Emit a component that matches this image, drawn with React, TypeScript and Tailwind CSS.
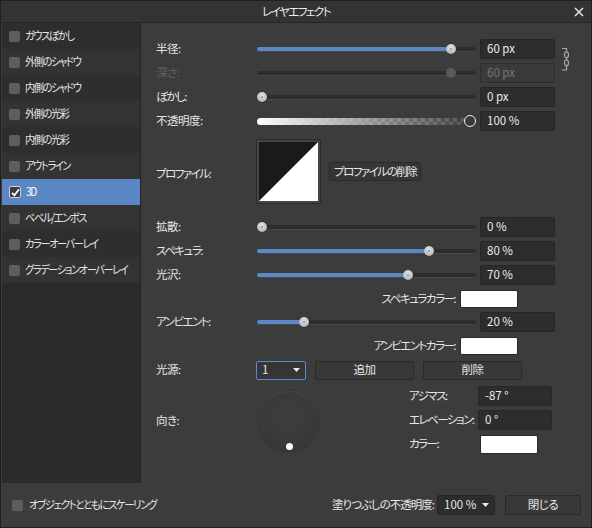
import React from 'react';

// kana-heavy labels are drawn tighter than kanji ones
const K = 'tracking-[-1.5px]';

const effects = [
  'ガウスぼかし',
  '外側のシャドウ',
  '内側のシャドウ',
  '外側の光彩',
  '内側の光彩',
  'アウトライン',
  '3D',
  'ベベル/エンボス',
  'カラーオーバーレイ',
  'グラデーションオーバーレイ',
];

function Check({ checked }: { checked?: boolean }) {
  if (checked) {
    return (
      <div className="w-[12px] h-[12px] rounded-[2px] bg-[#3b3b3b] border border-[#d0d0d0] flex items-center justify-center shrink-0">
        <svg width="9" height="9" viewBox="0 0 9 9">
          <path d="M1 4.8 L3.4 7.4 L8 1.2" stroke="#fff" strokeWidth="1.8" fill="none" />
        </svg>
      </div>
    );
  }
  return <div className="w-[11px] h-[11px] rounded-[2px] bg-[#5d5d5d] shrink-0" />;
}

function Slider({ pct, disabled }: { pct: number; disabled?: boolean }) {
  const x = 5 + pct * 209;
  return (
    <div className="relative w-[219px] h-[12px] flex items-center">
      <div className="w-full h-[5px] rounded-full bg-[#2d2d2d] border-b border-[#474747]" />
      {!disabled && pct > 0 && (
        <div className="absolute left-0 top-[4px] h-[4px] rounded-full bg-[#5b87c7]" style={{ width: x }} />
      )}
      {disabled ? (
        <div className="absolute top-[1px] w-[10px] h-[10px] rounded-full bg-[#5a5a5a]" style={{ left: x - 5 }} />
      ) : (
        <div
          className="absolute top-[1px] w-[10px] h-[10px] rounded-full bg-[radial-gradient(circle_at_50%_35%,#e2e2e2,#a9a9a9)] shadow-[0_0_1px_rgba(0,0,0,0.6)] flex items-center justify-center"
          style={{ left: x - 5 }}
        >
          <div className="w-[2px] h-[2px] rounded-full bg-[#6a93d2]" />
        </div>
      )}
    </div>
  );
}

function ValueBox({ children, disabled, w = 'w-[75px]' }: { children: React.ReactNode; disabled?: boolean; w?: string }) {
  return (
    <div
      className={`${w} h-[20px] rounded-[2px] border flex items-center pl-[6px] tracking-normal ${
        disabled ? 'bg-[#3a3a3a] border-[#2e2e2e] text-[#777]' : 'bg-[#2d2d2d] border-[#262626] text-[#ececec]'
      }`}
    >
      {children}
    </div>
  );
}

function SliderRow({
  label,
  pct,
  value,
  disabled,
  kana,
}: {
  label: string;
  pct: number;
  value: string;
  disabled?: boolean;
  kana?: boolean;
}) {
  return (
    <div className="h-[24px] flex items-center">
      <div className={`w-[101px] ${kana ? K : ''} ${disabled ? 'text-[#626262]' : ''}`}>{label}</div>
      <Slider pct={pct} disabled={disabled} />
      <div className="ml-[4px]">
        <ValueBox disabled={disabled}>{value}</ValueBox>
      </div>
    </div>
  );
}

function Arrow() {
  return (
    <svg width="7" height="4" viewBox="0 0 7 4">
      <path d="M0 0 H7 L3.5 4 Z" fill="#e8e8e8" />
    </svg>
  );
}

export default function App() {
  return (
    <div className="w-[592px] h-[528px] bg-[#3c3c3c] border border-[#1f1f1f] flex flex-col text-[11.5px] tracking-[-0.5px] whitespace-nowrap leading-none text-[#e6e6e6] font-['Noto_Sans_CJK_JP',sans-serif] [font-feature-settings:'palt']">
      {/* title */}
      <div className="h-[22px] bg-[#333333] border-b border-[#262626] flex items-center shrink-0">
        <div className="w-[22px]" />
        <div className={`flex-1 text-center text-[#ececec] ${K}`}>レイヤエフェクト</div>
        <div className="w-[22px] flex items-center justify-center pr-[2px]">
          <svg width="10" height="10" viewBox="0 0 10 10">
            <path d="M1 1 L9 9 M9 1 L1 9" stroke="#e6e6e6" strokeWidth="1.5" />
          </svg>
        </div>
      </div>

      <div className="flex h-[460px] shrink-0">
        {/* effect list */}
        <div className="ml-px w-[139px] bg-[#2b2b2b] border-r border-[#232323] flex flex-col overflow-hidden">
          {effects.map((name, i) => {
            const selected = name === '3D';
            return (
              <div
                key={name}
                className={`h-[26px] flex items-center gap-[5px] pl-[7px] ${K} ${
                  selected ? 'bg-[#5b87c5] text-white' : i % 2 === 0 ? 'bg-[#2e2e2e]' : 'bg-[#333333]'
                }`}
              >
                <Check checked={selected} />
                <span className="inline-block origin-left scale-x-[0.88]">{name}</span>
              </div>
            );
          })}
        </div>

        {/* settings */}
        <div className="flex-1 pl-[15px] pt-[14px] flex flex-col">
          <div className="flex">
            <div className="flex flex-col">
              <SliderRow label="半径:" pct={0.904} value="60 px" />
              <SliderRow label="深さ:" pct={0.904} value="60 px" disabled />
              <SliderRow label="ぼかし:" pct={0} value="0 px" kana />
              <div className="h-[24px] flex items-center">
                <div className="w-[101px]">不透明度:</div>
                <div className="relative w-[219px] h-[12px] flex items-center">
                  <div className="w-[209px] h-[7px] rounded-full bg-[linear-gradient(to_right,rgba(255,255,255,1),rgba(255,255,255,0)),repeating-conic-gradient(#575757_0%_25%,#3b3b3b_0%_50%)] [background-size:100%_100%,8px_8px]" />
                  <div className="absolute left-[207px] top-0 w-[12px] h-[12px] rounded-full border-[1.5px] border-[#f0f0f0] bg-[#3a3a3a]" />
                </div>
                <div className="ml-[4px]">
                  <ValueBox>100 %</ValueBox>
                </div>
              </div>
            </div>
            <div className="ml-[6px] pt-[10px]">
              <svg width="11" height="25" viewBox="0 0 11 25">
                <path d="M1 1.5 H5.5 V4.5 M5.5 11 V12.5 M5.5 19 V23 H1" stroke="#a8a8a8" strokeWidth="1.2" fill="none" />
                <ellipse cx="5.5" cy="7.8" rx="2" ry="3" stroke="#a8a8a8" strokeWidth="1.2" fill="none" />
                <ellipse cx="5.5" cy="15.8" rx="2" ry="3" stroke="#a8a8a8" strokeWidth="1.2" fill="none" />
              </svg>
            </div>
          </div>

          {/* profile */}
          <div className="mt-[6px] h-[65px] flex items-center">
            <div className={`w-[100px] pt-[5px] ${K}`}>プロファイル:</div>
            <div className="w-[65px] h-[65px] rounded-[2px] border border-[#2a2a2a] bg-[#454545] p-[2px]">
              <svg width="59" height="59" viewBox="0 0 59 59" className="block">
                <rect width="59" height="59" fill="#1a1a1a" />
                <path d="M59 0 V59 H0 Z" fill="#ffffff" />
              </svg>
            </div>
            <div className={`ml-[8px] h-[19px] px-[4px] rounded-[2px] border border-[#2a2a2a] bg-[#363636] flex items-center ${K}`}>
              プロファイルの削除
            </div>
          </div>

          <div className="mt-[11px] flex flex-col">
            <SliderRow label="拡散:" pct={0} value="0 %" />
            <SliderRow label="スペキュラ:" pct={0.8} value="80 %" kana />
            <SliderRow label="光沢:" pct={0.7} value="70 %" />
            <div className="h-[23px] flex items-center">
              <div className={`w-[304px] text-right pr-[5px] ${K}`}>スペキュラカラー:</div>
              <div className="w-[58px] h-[18px] rounded-[2px] bg-white border border-[#2a2a2a]" />
            </div>
            <SliderRow label="アンビエント:" pct={0.2} value="20 %" kana />
            <div className="h-[24px] flex items-center">
              <div className={`w-[304px] text-right pr-[5px] ${K}`}>アンビエントカラー:</div>
              <div className="w-[58px] h-[18px] rounded-[2px] bg-white border border-[#2a2a2a]" />
            </div>
            <div className="h-[24px] flex items-center">
              <div className="w-[100px]">光源:</div>
              <div className="w-[50px] h-[19px] rounded-[2px] border border-[#5c8ad0] bg-[#353535] flex items-center justify-between pl-[5px] pr-[5px]">
                <span>1</span>
                <Arrow />
              </div>
              <div className="ml-[9px] w-[99px] h-[19px] rounded-[2px] border border-[#2a2a2a] bg-[#383838] flex items-center justify-center">
                追加
              </div>
              <div className="ml-[9px] w-[99px] h-[19px] rounded-[2px] border border-[#2a2a2a] bg-[#383838] flex items-center justify-center">
                削除
              </div>
            </div>
          </div>

          {/* direction */}
          <div className="mt-[2px] h-[72px] flex items-center">
            <div className="w-[102px] pt-[2px]">向き:</div>
            <div className="relative w-[61px] h-[61px] mt-[3px] rounded-full bg-[radial-gradient(circle_at_50%_40%,#3e3e3e,#383838_70%,#333333)] shadow-[inset_0_1px_1px_rgba(255,255,255,0.09),0_0_0_1px_#363636]">
              <div className="absolute left-[28px] top-[52px] w-[7px] h-[7px] rounded-full bg-white" />
            </div>
            <div className={`ml-[90px] flex flex-col ${K}`}>
              <div className="h-[24px] flex items-center">
                <div className="w-[69px]">アジマス:</div>
                <ValueBox w="w-[74px]">-87 °</ValueBox>
              </div>
              <div className="h-[24px] flex items-center">
                <div className="w-[69px]">エレベーション:</div>
                <ValueBox w="w-[74px]">0 °</ValueBox>
              </div>
              <div className="h-[24px] flex items-center">
                <div className="w-[71px]">カラー:</div>
                <div className="w-[58px] h-[19px] rounded-[2px] bg-white border border-[#2a2a2a]" />
              </div>
            </div>
          </div>
        </div>
      </div>

      {/* footer */}
      <div className="flex-1 flex items-center pl-[11px] pr-[10px]">
        <Check />
        <span className={`ml-[6px] inline-block origin-left scale-x-[0.9] ${K}`}>オブジェクトとともにスケーリング</span>
        <div className="flex-1" />
        <span className="mr-[3px] tracking-[-1px]">塗りつぶしの不透明度:</span>
        <div className="w-[58px] h-[20px] rounded-[2px] border border-[#262626] bg-[#2d2d2d] flex items-center justify-between pl-[6px] pr-[5px] tracking-normal">
          <span>100 %</span>
          <Arrow />
        </div>
        <div className="ml-[10px] w-[76px] h-[20px] rounded-[2px] border border-[#2a2a2a] bg-[#383838] flex items-center justify-center">
          閉じる
        </div>
      </div>
    </div>
  );
}
